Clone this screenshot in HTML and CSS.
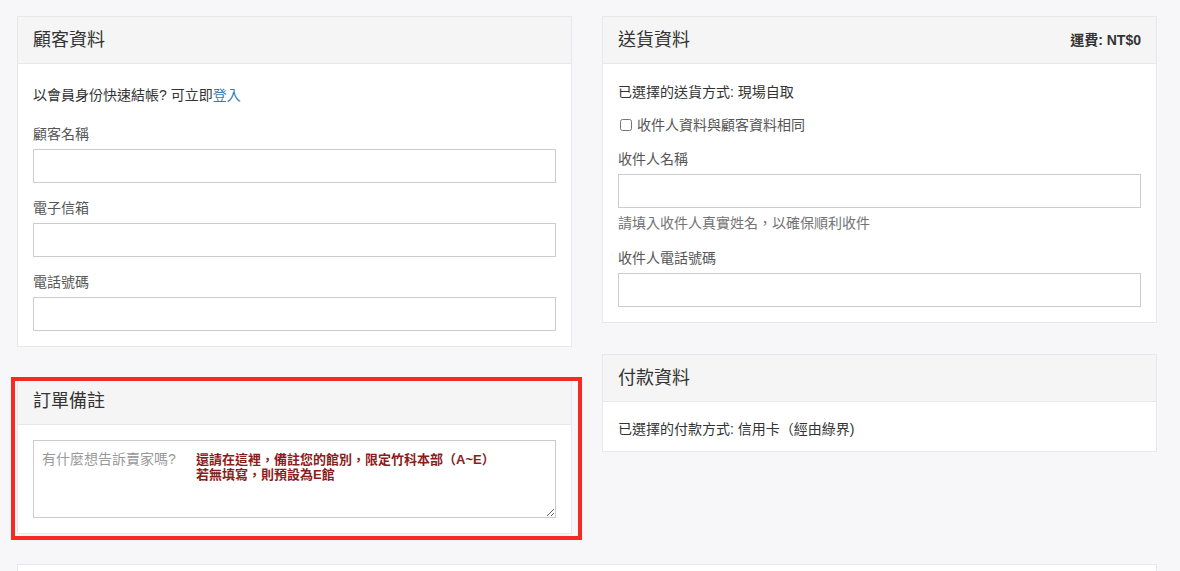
FILE: index.html
```html
<!DOCTYPE html>
<html lang="zh-Hant">
<head>
<meta charset="UTF-8" />
<meta name="viewport" content="width=device-width, initial-scale=1" />
<title>結帳</title>
<link rel="stylesheet" href="styles.css">
</head>
<body>
  <div class="checkout">
    <div class="col">
      <div class="panel">
        <div class="panel-heading">
          <h3 class="panel-title">顧客資料</h3>
        </div>
        <div class="panel-body customer">
          <p class="intro">以會員身份快速結帳? 可立即<a href="#">登入</a></p>
          <div class="form-group">
            <label for="name">顧客名稱</label>
            <input type="text" id="name" class="form-control">
          </div>
          <div class="form-group">
            <label for="email">電子信箱</label>
            <input type="email" id="email" class="form-control">
          </div>
          <div class="form-group last">
            <label for="phone">電話號碼</label>
            <input type="tel" id="phone" class="form-control">
          </div>
        </div>
      </div>

      <div class="highlight">
        <div class="panel notes">
          <div class="panel-heading">
            <h3 class="panel-title">訂單備註</h3>
          </div>
          <div class="panel-body">
            <div class="note-field">
              <textarea class="form-control" placeholder="有什麼想告訴賣家嗎?"></textarea>
              <div class="note-hint">還請在這裡，備註您的館別，限定竹科本部（A~E）<br>若無填寫，則預設為E館</div>
            </div>
          </div>
        </div>
      </div>
    </div>

    <div class="col">
      <div class="panel">
        <div class="panel-heading">
          <h3 class="panel-title">送貨資料</h3>
          <span class="fee">運費: NT$0</span>
        </div>
        <div class="panel-body shipping">
          <p class="method">已選擇的送貨方式: 現場自取</p>
          <div class="checkbox">
            <label><input type="checkbox"> 收件人資料與顧客資料相同</label>
          </div>
          <div class="form-group">
            <label for="recipient">收件人名稱</label>
            <input type="text" id="recipient" class="form-control">
            <p class="help-block">請填入收件人真實姓名，以確保順利收件</p>
          </div>
          <div class="form-group last">
            <label for="recipient-phone">收件人電話號碼</label>
            <input type="tel" id="recipient-phone" class="form-control">
          </div>
        </div>
      </div>

      <div class="panel payment">
        <div class="panel-heading">
          <h3 class="panel-title">付款資料</h3>
        </div>
        <div class="panel-body">
          <p class="method">已選擇的付款方式: 信用卡（經由綠界)</p>
        </div>
      </div>
    </div>

    <div class="panel wide">
      <div class="panel-body"></div>
    </div>
  </div>
</body>
</html>
```

FILE: styles.css
```css
/* Base */
* {
  box-sizing: border-box;
}
body {
  margin: 0;
  background: #f7f7f9;
  color: #333;
  font-family: "Liberation Sans", "Noto Sans CJK TC", sans-serif;
  font-size: 14px;
  line-height: 20px;
}
a {
  color: #337ab7;
  text-decoration: none;
}
p {
  margin: 0;
}

/* Layout */
.checkout {
  display: grid;
  grid-template-columns: 555px 555px;
  column-gap: 30px;
  align-items: start;
  padding: 16px 0 0 17px;
}
.col {
  display: flex;
  flex-direction: column;
}

/* Panels */
.panel {
  background: #fff;
  border: 1px solid #e8e8ea;
}
.panel-heading {
  display: flex;
  justify-content: space-between;
  align-items: center;
  background: #f5f5f5;
  border-bottom: 1px solid #e8e8ea;
  padding: 10px 15px;
}
.panel-title {
  margin: 0;
  font-size: 18px;
  font-weight: normal;
  line-height: 26px;
  color: #333;
}
.fee {
  font-weight: bold;
  color: #333;
}
.panel-body {
  padding: 15px;
}

/* Forms */
.form-group {
  margin-bottom: 15px;
}
.form-group.last {
  margin-bottom: 0;
}
.form-group > label {
  display: block;
  margin-bottom: 5px;
  color: #555;
}
.form-control {
  display: block;
  width: 100%;
  height: 34px;
  border: 1px solid #ccc;
  border-radius: 0;
  padding: 6px 8px;
  background: #fff;
  font: inherit;
  color: #333;
}
textarea.form-control {
  height: 78px;
  padding: 8px;
  resize: vertical;
}
textarea.form-control::placeholder {
  color: #999;
}
.help-block {
  margin-top: 5px;
  color: #737373;
}

/* Customer panel */
.customer {
  padding-top: 20px;
}
.customer .intro {
  line-height: 22px;
  margin-bottom: 18px;
}

/* Shipping panel */
.shipping {
  padding-top: 18px;
}
.shipping .method {
  margin-bottom: 13px;
}
.checkbox {
  margin-bottom: 14px;
}
.checkbox label {
  display: flex;
  align-items: center;
  color: #555;
}
.checkbox input {
  margin: 0 5px 0 2px;
  width: 12px;
  height: 12px;
}

/* Payment panel */
.payment {
  margin-top: 31px;
}
.payment .panel-body {
  padding: 17px 15px 12px;
}

/* Order notes, marked with a red frame */
.highlight {
  margin: 30px -10px 0 -6px;
  border: 4px solid #f52a20;
  padding: 0 6px 2px 2px;
}
.notes {
  border-top: 0;
}
.notes .panel-heading {
  padding: 7px 15px 10px;
}
.note-field {
  position: relative;
}
.note-hint {
  position: absolute;
  left: 163px;
  top: 12px;
  font-size: 13px;
  line-height: 15px;
  font-weight: bold;
  color: #8b1c1c;
  pointer-events: none;
}

/* Full-width panel below */
.wide {
  grid-column: 1 / -1;
  margin-top: 24px;
  width: 1140px;
}
.wide .panel-body {
  height: 120px;
}
```
